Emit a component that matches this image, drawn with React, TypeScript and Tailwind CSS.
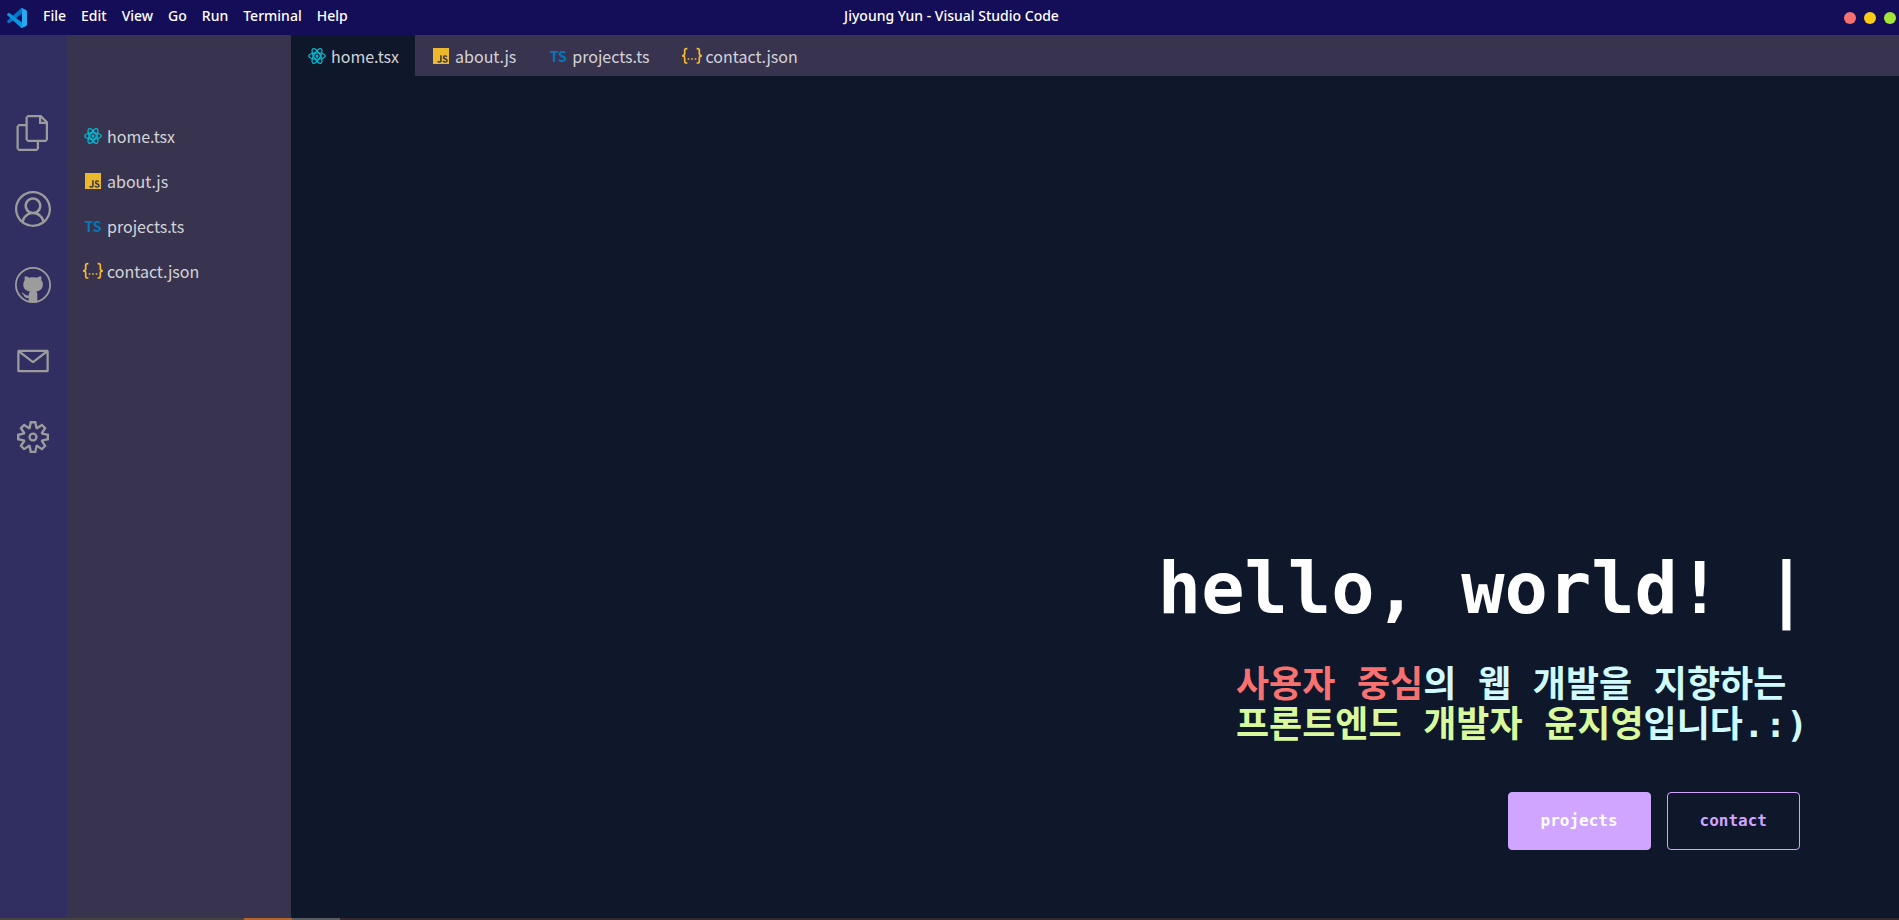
import type { ReactNode } from "react";
import { VscFiles, VscAccount, VscMail, VscSettingsGear } from "react-icons/vsc";
import { SiJavascript } from "react-icons/si";

function CodeLogo() {
  return (
    <svg viewBox="0 0 100 100" className="size-5" aria-hidden="true">
      <path
        fill="#0179cb"
        d="M96.5 10.8 75.9.9a6.2 6.2 0 0 0-7.1 1.2L1.4 63.5a4.2 4.2 0 0 0 0 6.2l5.5 5a4.2 4.2 0 0 0 5.3.2l81.1-61.5a4.1 4.1 0 0 1 6.7 3.3v-.3a6.3 6.3 0 0 0-3.5-5.6Z"
      />
      <path
        fill="#0a95e0"
        d="M96.5 89.2 75.9 99.1a6.2 6.2 0 0 1-7.1-1.2L1.4 36.5a4.2 4.2 0 0 1 0-6.2l5.5-5a4.2 4.2 0 0 1 5.3-.2l81.1 61.5a4.1 4.1 0 0 0 6.7-3.3v.3a6.3 6.3 0 0 1-3.5 5.6Z"
      />
      <path
        fill="#26a9f2"
        d="M75.9 99.1a6.2 6.2 0 0 1-7.1-1.2c2.3 2.3 6.2.7 6.2-2.6V4.7c0-3.3-3.9-4.9-6.2-2.6A6.2 6.2 0 0 1 75.9.9l20.6 9.9a6.3 6.3 0 0 1 3.5 5.6v67.2a6.3 6.3 0 0 1-3.5 5.6Z"
      />
    </svg>
  );
}

function OctocatIcon({ className }: { className?: string }) {
  return (
    <svg viewBox="0 0 36 36" className={className} aria-hidden="true">
      <circle cx="18" cy="18" r="17.1" fill="none" stroke="currentColor" strokeWidth="1.8" />
      <path
        fill="currentColor"
        d="M9.9 9.2c1.7-.1 3.2.7 4.4 1.6 2.4-.6 5-.6 7.4 0 1.2-.9 2.7-1.7 4.4-1.6.5 1.2.5 2.5.2 3.7 1.3 1.500 1.700 3.200 1.500 5.200-.3 4-2.700 5.900-6.500 6.400.7.8 1 1.700 1 2.900V34.900c-3 .8-5.600.8-8.600 0v-3.900c-2.200.2-3.700-.3-4.600-2-.5-1-1.100-1.900-2.200-2.500-.6-.5.200-.8.900-.6 2.400.7 2.600 3.400 5.900 2.500.1-1.600.4-3.100 1.300-3.900-3.900-.5-6.500-2.400-6.700-6.400-.1-2 .4-3.700 1.500-5.200-.3-1.200-.4-2.500.1-3.700Z"
      />
    </svg>
  );
}

function ReactIcon() {
  return (
    <svg viewBox="0 0 20 20" className="size-5" fill="none" stroke="#00bcd4" strokeWidth="1.3" aria-hidden="true">
      <ellipse cx="10" cy="10" rx="8.3" ry="3.2" />
      <ellipse cx="10" cy="10" rx="8.3" ry="3.2" transform="rotate(60 10 10)" />
      <ellipse cx="10" cy="10" rx="8.3" ry="3.2" transform="rotate(120 10 10)" />
      <circle cx="10" cy="10" r="1.5" fill="#00bcd4" stroke="none" />
    </svg>
  );
}

function JsonIcon() {
  return (
    <svg viewBox="0 0 20 20" className="size-5" fill="none" stroke="#f5b92c" strokeWidth="1.7" aria-hidden="true">
      <path d="M5.4 2.700H4.400Q2.700 2.700 2.700 4.400V7.600Q2.700 9.900 0 9.900 2.700 9.900 2.700 12.200v3.100q0 1.700 1.700 1.700H5.400" />
      <path d="M14.600 2.700h1q1.700 0 1.700 1.700V7.600q0 2.300 2.700 2.300-2.700 0-2.700 2.300v3.100q0 1.700-1.700 1.700h-1" />
      <path d="M5.700 13h1.600M9.200 13h1.600M12.700 13h1.600" strokeWidth="1.500" />
    </svg>
  );
}

const files: { name: string; icon: ReactNode }[] = [
  { name: "home.tsx", icon: <ReactIcon /> },
  { name: "about.js", icon: <SiJavascript className="size-4 text-[#ecb92b]" aria-hidden="true" /> },
  {
    name: "projects.ts",
    icon: <span className="text-sm leading-5 font-bold text-[#0277bd]">TS</span>,
  },
  { name: "contact.json", icon: <JsonIcon /> },
];

const menus = ["File", "Edit", "View", "Go", "Run", "Terminal", "Help"];

const activities = [
  { label: "Explorer", Icon: VscFiles, size: "size-9" },
  { label: "Account", Icon: VscAccount, size: "size-9" },
  { label: "GitHub", Icon: OctocatIcon, size: "size-9" },
  { label: "Mail", Icon: VscMail, size: "size-9" },
  { label: "Settings", Icon: VscSettingsGear, size: "size-8" },
];

function FileLabel({ name, icon }: { name: string; icon: ReactNode }) {
  return (
    <>
      <span className="flex size-5 items-center justify-center">{icon}</span>
      <span>{name}</span>
    </>
  );
}

export default function App() {
  return (
    <div className="flex min-h-screen flex-col bg-[#0f172a] font-['Noto_Sans_CJK_KR',sans-serif] text-[#d4d4d8]">
      <header className="grid h-[35px] grid-cols-[1fr_auto_1fr] items-center bg-[#140d57] font-['Noto_Sans',sans-serif] text-sm font-medium text-white">
        <div className="flex items-center pl-[7px]">
          <CodeLogo />
          <nav className="ml-4 flex gap-[15px] pb-1">
            {menus.map((menu) => (
              <button key={menu} type="button">
                {menu}
              </button>
            ))}
          </nav>
        </div>
        <h2 className="pb-1 pl-1">Jiyoung Yun - Visual Studio Code</h2>
        <div className="flex justify-end gap-2 pr-[3px]">
          <button type="button" aria-label="Close" className="size-3 rounded-full bg-[#f87171]" />
          <button type="button" aria-label="Minimize" className="size-3 rounded-full bg-[#facc15]" />
          <button type="button" aria-label="Maximize" className="size-3 rounded-full bg-[#a3e635]" />
        </div>
      </header>

      <div className="flex grow">
        <nav className="flex w-[67px] shrink-0 flex-col items-center gap-10 bg-[#312e62] pt-20 pr-[2px] text-[#9c9c9c]">
          {activities.map(({ label, Icon, size }) => (
            <button key={label} type="button" aria-label={label} className="flex size-9 items-center justify-center">
              <Icon className={size} />
            </button>
          ))}
        </nav>

        <aside className="w-56 shrink-0 bg-[#383450] pt-[78px] pl-4">
          <ul>
            {files.map((file) => (
              <li key={file.name}>
                <a href="#" className="flex h-[45px] items-center gap-1">
                  <FileLabel {...file} />
                </a>
              </li>
            ))}
          </ul>
        </aside>

        <div className="flex grow flex-col">
          <nav className="flex h-[41px] bg-[#383450]">
            {files.map((file, index) => (
              <a
                key={file.name}
                href="#"
                className={index === 0 ? "flex items-center gap-1 bg-[#0f172a] px-4" : "flex items-center gap-1 px-4"}
              >
                <FileLabel {...file} />
              </a>
            ))}
          </nav>

          <main className="flex grow flex-col items-end justify-end pr-[91px] pb-[68px] font-['DejaVu_Sans_Mono','Noto_Sans_CJK_KR',monospace] font-bold">
            <h1 className="text-7xl leading-none text-white">hello, world! |</h1>
            <p className="mt-[41px] mb-[47px] text-4xl leading-10 text-[#cffafe]">
              <span className="text-[#f87171]">사용자 중심</span>의 웹 개발을 지향하는
              <br />
              <span className="text-[#d9f99d]">프론트엔드 개발자 윤지영</span>입니다.:)
            </p>
            <div className="mr-2 flex gap-4">
              <button type="button" className="rounded border border-[#d0a5ff] bg-[#d0a5ff] px-8 py-4 text-white">
                projects
              </button>
              <button type="button" className="rounded border border-[#d0a5ff] px-8 py-4 text-[#d0a5ff]">
                contact
              </button>
            </div>
          </main>
        </div>
      </div>

      <footer className="flex h-[2px] bg-[#33292f]">
        <div className="w-[244px] bg-[#45423f]" />
        <div className="w-12 bg-[#b3652c]" />
        <div className="w-12 bg-[#5b5b62]" />
      </footer>
    </div>
  );
}
